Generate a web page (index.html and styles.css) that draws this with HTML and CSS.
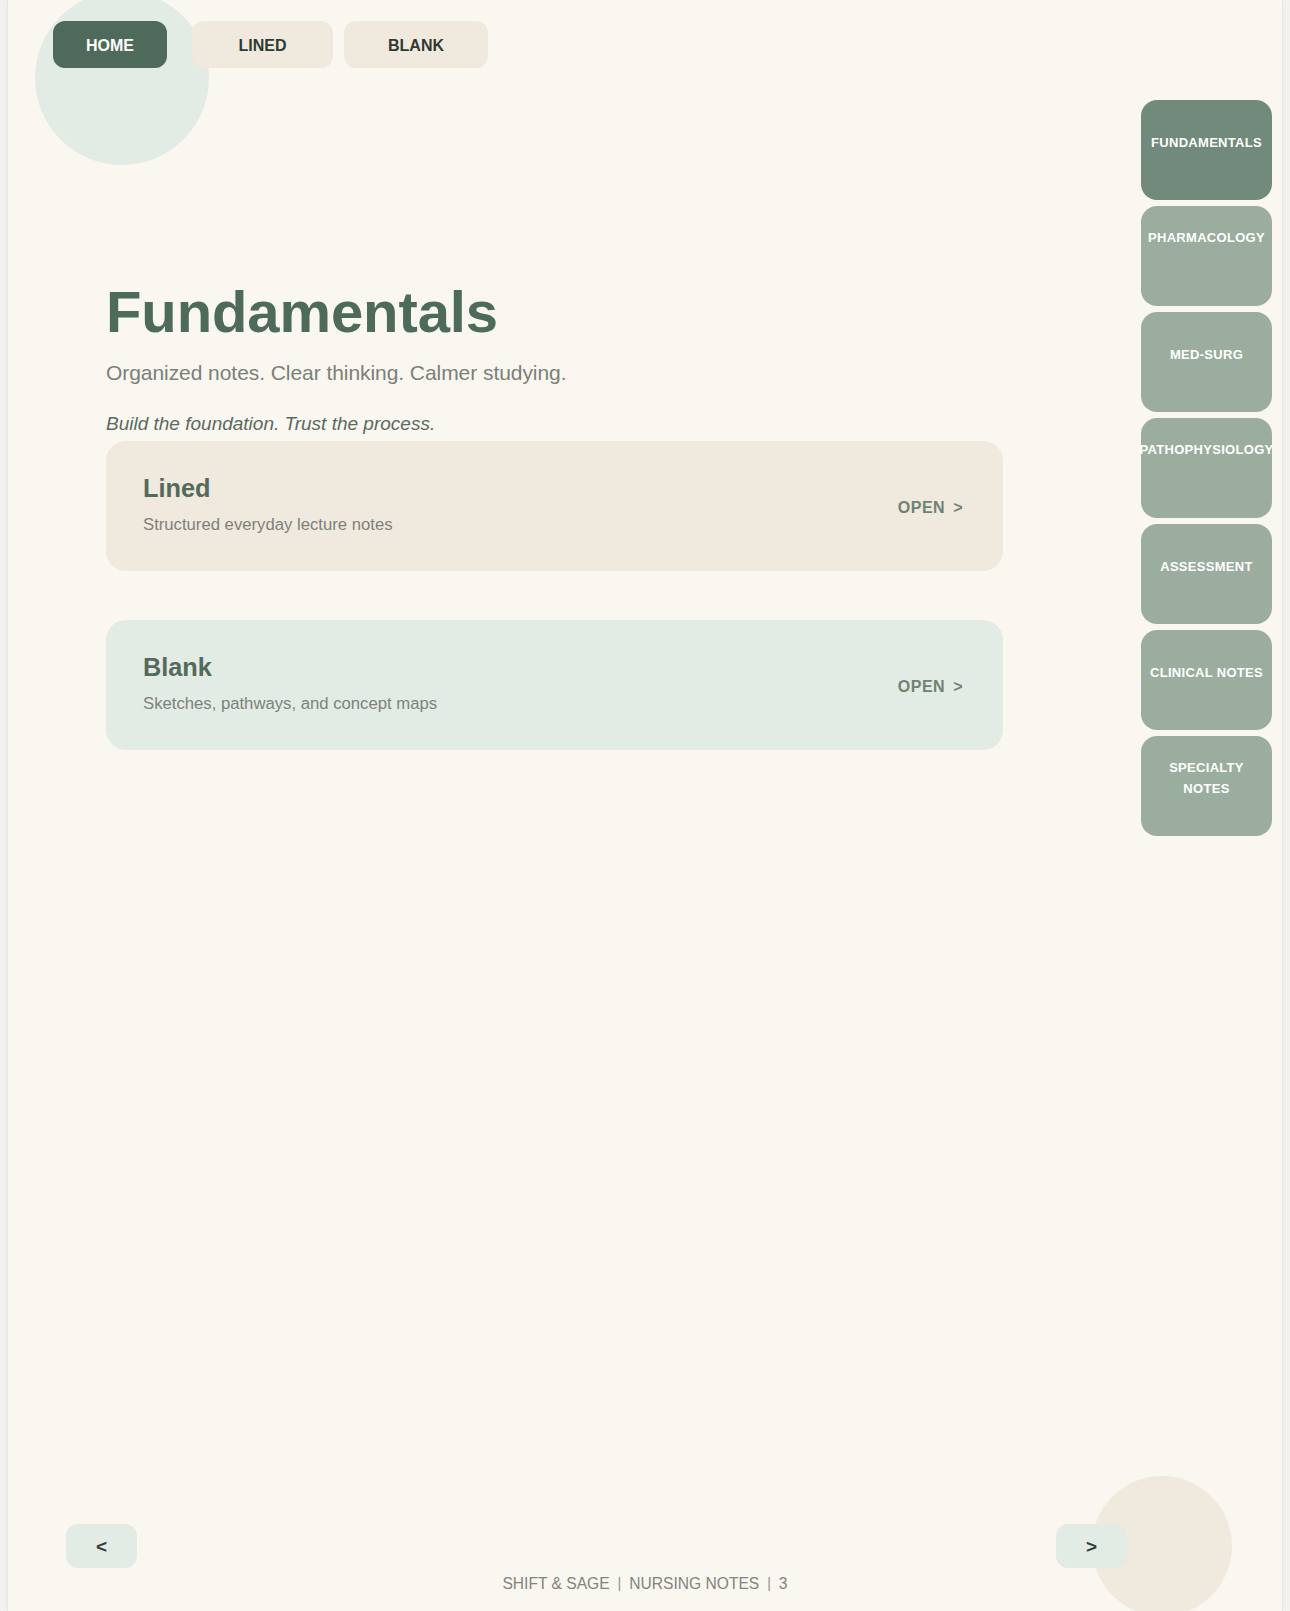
FILE: index.html
```html
<!DOCTYPE html>
<html lang="en">
<head>
<meta charset="utf-8">
<title>Fundamentals</title>
<link rel="stylesheet" href="styles.css">
</head>
<body>
<div class="page">
  <div class="blob blob-top"></div>
  <div class="blob blob-bottom"></div>

  <nav class="topnav">
    <a class="nav-btn nav-home">HOME</a>
    <a class="nav-btn nav-lined">LINED</a>
    <a class="nav-btn nav-blank">BLANK</a>
  </nav>

  <div class="main">
    <section class="content">
      <h1 class="title">Fundamentals</h1>
      <p class="subtitle">Organized notes. Clear thinking. Calmer studying.</p>
      <p class="motto">Build the foundation. Trust the process.</p>

      <div class="cards">
        <a class="card card-lined">
          <div class="card-text">
            <h2 class="card-title">Lined</h2>
            <p class="card-desc">Structured everyday lecture notes</p>
          </div>
          <span class="card-open">OPEN<span class="chev">&gt;</span></span>
        </a>
        <a class="card card-blank">
          <div class="card-text">
            <h2 class="card-title">Blank</h2>
            <p class="card-desc">Sketches, pathways, and concept maps</p>
          </div>
          <span class="card-open">OPEN<span class="chev">&gt;</span></span>
        </a>
      </div>
    </section>

    <aside class="tabs">
      <a class="tab tab-active"><span>FUNDAMENTALS</span></a>
      <a class="tab tab-long"><span>PHARMACOLOGY</span></a>
      <a class="tab"><span>MED-SURG</span></a>
      <a class="tab tab-long"><span>PATHOPHYSIOLOGY</span></a>
      <a class="tab"><span>ASSESSMENT</span></a>
      <a class="tab"><span>CLINICAL NOTES</span></a>
      <a class="tab"><span>SPECIALTY<br>NOTES</span></a>
    </aside>
  </div>

  <footer class="footer">
    <div class="pager">
      <a class="pager-btn">&lt;</a>
      <a class="pager-btn">&gt;</a>
    </div>
    <p class="caption">SHIFT &amp; SAGE<span class="sep">|</span>NURSING NOTES<span class="sep">|</span>3</p>
  </footer>
</div>
</body>
</html>
```

FILE: styles.css
```css
* { box-sizing: border-box; }

html, body {
  margin: 0;
  padding: 0;
}

body {
  background: #f3f2ef;
  padding: 0 8px;
  font-family: "Liberation Sans", Arial, Helvetica, sans-serif;
  height: 1611px;
  overflow: hidden;
}

.page {
  position: relative;
  height: 1611px;
  background: #faf7f0;
  box-shadow: 0 0 0 1px #e9e7e2, 0 0 6px rgba(0, 0, 0, 0.05);
  overflow: hidden;
  display: flex;
  flex-direction: column;
}

.blob {
  position: absolute;
  border-radius: 50%;
  z-index: 0;
}

.blob-top {
  left: 27px;
  top: -9px;
  width: 174px;
  height: 174px;
  background: #e3ebe5;
}

.blob-bottom {
  left: 1084px;
  top: 1476px;
  width: 140px;
  height: 140px;
  background: #f0e9de;
}

/* top navigation */
.topnav {
  position: relative;
  z-index: 1;
  display: flex;
  align-items: center;
  gap: 11px;
  padding: 21px 0 0 45px;
}

.nav-btn {
  display: flex;
  align-items: center;
  justify-content: center;
  height: 47px;
  padding-top: 2px;
  border-radius: 12px;
  font-size: 16px;
  font-weight: 700;
  color: #2f3a33;
  background: #f0e9de;
  text-decoration: none;
}

.nav-home {
  width: 114px;
  margin-right: 14px;
  background: #4e6a5b;
  color: #ffffff;
}

.nav-lined { width: 141px; }
.nav-blank { width: 144px; }

/* main area */
.main {
  position: relative;
  z-index: 1;
  display: flex;
  justify-content: space-between;
  align-items: flex-start;
  margin-top: 32px;
  padding: 0 10px 0 98px;
}

.content {
  width: 897px;
  padding-top: 180px;
}

.title {
  margin: 0;
  font-size: 58px;
  line-height: 64px;
  font-weight: 700;
  color: #4d6a5a;
  letter-spacing: -0.1px;
}

.subtitle {
  margin: 15px 0 0;
  font-size: 21px;
  line-height: 28px;
  letter-spacing: -0.06px;
  color: #7b8079;
}

.motto {
  margin: 25px 0 0;
  font-size: 19px;
  line-height: 24px;
  font-style: italic;
  color: #5b6a61;
}

.cards {
  display: flex;
  flex-direction: column;
  gap: 49px;
  margin-top: 5px;
}

.card {
  display: flex;
  align-items: center;
  justify-content: space-between;
  height: 130px;
  padding: 0 40px 0 37px;
  border-radius: 20px;
  text-decoration: none;
}

.card-lined { background: #f0e9de; }
.card-blank { background: #e3ebe5; }

.card-text { padding-bottom: 4px; }

.card-title {
  margin: 0;
  font-size: 25.3px;
  line-height: 32px;
  font-weight: 700;
  color: #546a5c;
}

.card-desc {
  margin: 10px 0 0;
  font-size: 16.7px;
  line-height: 22px;
  color: #7d827b;
}

.card-open {
  padding-top: 3px;
  font-size: 16px;
  font-weight: 700;
  letter-spacing: 0.5px;
  color: #6f8273;
}

.chev { margin-left: 8px; }

/* side tabs */
.tabs {
  display: flex;
  flex-direction: column;
  gap: 6px;
  width: 131px;
}

.tab {
  display: flex;
  align-items: center;
  justify-content: center;
  height: 100px;
  padding-bottom: 16px;
  border-radius: 16px;
  background: #9bad9e;
  color: #ffffff;
  font-size: 13px;
  line-height: 21px;
  font-weight: 700;
  letter-spacing: 0.3px;
  text-align: center;
  text-decoration: none;
}

.tab span { white-space: nowrap; }

.tab-active { background: #718a7b; }

.tab-long { padding-bottom: 37px; }

/* footer */
.footer {
  position: relative;
  z-index: 1;
  margin-top: auto;
  padding-bottom: 17px;
}

.pager {
  display: flex;
  justify-content: space-between;
  padding: 0 155px 0 58px;
}

.pager-btn {
  display: flex;
  align-items: center;
  justify-content: center;
  width: 71px;
  height: 44px;
  padding-top: 2px;
  border-radius: 12px;
  background: #e3ebe5;
  color: #333d37;
  font-size: 19px;
  font-weight: 700;
  text-decoration: none;
}

.caption {
  margin: 5px 0 0;
  text-align: center;
  font-size: 15.6px;
  line-height: 20px;
  color: #7f847e;
}

.sep {
  display: inline-block;
  margin: 0 8px;
  font-size: 14px;
  color: #8c918b;
  vertical-align: 1px;
}
```
